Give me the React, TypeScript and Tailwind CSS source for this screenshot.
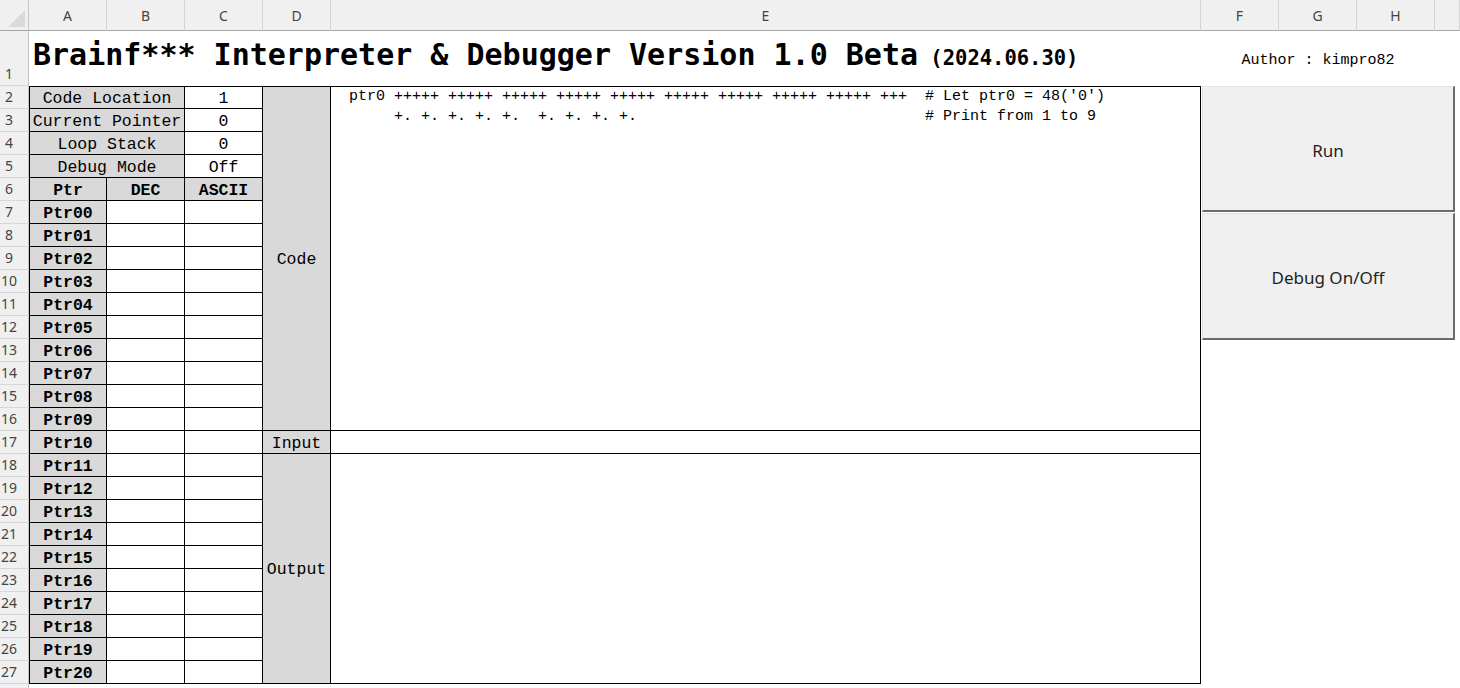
import React from 'react'

const cellFont = "font-['Liberation_Mono',monospace] text-[16.5px] leading-none text-black"
const uiFont = "font-['Noto_Sans','Open_Sans',sans-serif]"

const columns = ['A', 'B', 'C', 'D', 'E', 'F', 'G', 'H', '']

const stats = [
  ['Current Pointer', '0'],
  ['Loop Stack', '0'],
  ['Debug Mode', 'Off'],
]

const codeLines = [
  "ptr0 +++++ +++++ +++++ +++++ +++++ +++++ +++++ +++++ +++++ +++  # Let ptr0 = 48('0')",
  '     +. +. +. +. +.  +. +. +. +.                                # Print from 1 to 9',
]

const pad = (n: number) => (n < 10 ? `0${n}` : `${n}`)

const ColHead = ({ label }: { label: string }) => (
  <div
    className={`flex items-center justify-center pt-[2px] bg-[#f0f0f0] border-r border-b border-r-[#d4d4d4] border-b-[#a6a6a6] text-[14px] leading-none text-[#444] ${uiFont}`}
  >
    {label}
  </div>
)

const RowHead = ({ n }: { n: number }) => (
  <div
    className={`col-start-1 flex items-end justify-center pr-[10px] pb-[4px] bg-[#f0f0f0] border-r border-b border-r-[#c4c4c4] border-b-[#d8d8d8] text-[14px] leading-none text-[#444] ${uiFont}`}
  >
    {n}
  </div>
)

interface CellProps {
  children?: React.ReactNode
  className?: string
}

const Cell = ({ children, className = '' }: CellProps) => (
  <div
    className={`flex items-center justify-center pt-[4px] border-r border-b border-black whitespace-nowrap ${cellFont} ${className}`}
  >
    {children}
  </div>
)

const SheetButton = ({ label, className = '' }: { label: string; className?: string }) => (
  <div
    className={`absolute left-[1202px] w-[253px] flex items-center justify-center pt-[3px] bg-[#f0f0f0] border-t border-l border-t-[#e2e2e2] border-l-[#e2e2e2] border-r-2 border-b-2 border-r-[#6b6b6b] border-b-[#6b6b6b] text-[17px] leading-none text-[#1f1f1f] ${uiFont} ${className}`}
  >
    {label}
  </div>
)

export default function App() {
  const ptrRows = Array.from({ length: 21 }, (_, i) => i)

  return (
    <div className="relative w-[1460px] h-[688px] overflow-hidden bg-white">
      <div className="grid grid-cols-[29px_78px_78px_78px_68px_870px_78px_78px_78px_1fr] grid-rows-[31px_55px_repeat(27,23px)]">
        {/* Column headers */}
        <div className="relative bg-[#f0f0f0] border-r border-b border-r-[#c4c4c4] border-b-[#a6a6a6]">
          <svg className="absolute left-0 top-0" width="29" height="31" viewBox="0 0 29 31">
            <polygon points="8,27 25,27 25,10" fill="#dadada" />
          </svg>
        </div>
        {columns.map((c, i) => (
          <ColHead key={i} label={c} />
        ))}

        {/* Row 1: title + author */}
        <RowHead n={1} />
        <div className="col-span-6 pl-[4px] pt-[9px] whitespace-nowrap font-['DejaVu_Sans_Mono',monospace] font-bold text-black leading-[30px]">
          <span className="text-[30px]">Brainf*** Interpreter &amp; Debugger Version 1.0 Beta</span>
          <span className="text-[20.5px]"> (2024.06.30)</span>
        </div>
        <div className="flex justify-center pt-[20px] whitespace-nowrap font-['Liberation_Mono',monospace] text-[15px] leading-[20px] text-black">
          Author : kimpro82
        </div>

        {/* Row 2 */}
        <RowHead n={2} />
        <Cell className="col-span-2 border-t border-l bg-[#d9d9d9]">Code Location</Cell>
        <Cell className="border-t">1</Cell>
        <Cell className="row-span-15 border-t bg-[#d9d9d9]">Code</Cell>
        <div className="row-span-15 border-t border-r border-b border-black overflow-hidden">
          <pre className="pl-[18px] font-['Liberation_Mono',monospace] text-[15px] leading-[20px] text-black">
            {codeLines.join('\n')}
          </pre>
        </div>

        {/* Rows 3-5 */}
        {stats.map(([label, value], i) => (
          <React.Fragment key={label}>
            <RowHead n={i + 3} />
            <Cell className="col-span-2 border-l bg-[#d9d9d9]">{label}</Cell>
            <Cell>{value}</Cell>
          </React.Fragment>
        ))}

        {/* Row 6 */}
        <RowHead n={6} />
        <Cell className="border-l bg-[#d9d9d9] font-bold">Ptr</Cell>
        <Cell className="bg-[#d9d9d9] font-bold">DEC</Cell>
        <Cell className="bg-[#d9d9d9] font-bold">ASCII</Cell>

        {/* Pointer rows 7-27 */}
        {ptrRows.map((i) => (
          <React.Fragment key={i}>
            <RowHead n={i + 7} />
            <Cell className="border-l bg-[#d9d9d9] font-bold">Ptr{pad(i)}</Cell>
            <Cell />
            <Cell />
            {i === 10 && (
              <>
                <Cell className="bg-[#d9d9d9]">Input</Cell>
                <div className="border-r border-b border-black" />
              </>
            )}
            {i === 11 && (
              <>
                <Cell className="row-span-10 bg-[#d9d9d9]">Output</Cell>
                <div className="row-span-10 border-r border-b border-black" />
              </>
            )}
          </React.Fragment>
        ))}

        <RowHead n={28} />
      </div>

      {/* Form buttons */}
      <SheetButton label="Run" className="top-[86px] h-[126px]" />
      <SheetButton label="Debug On/Off" className="top-[213px] h-[127px]" />
    </div>
  )
}
